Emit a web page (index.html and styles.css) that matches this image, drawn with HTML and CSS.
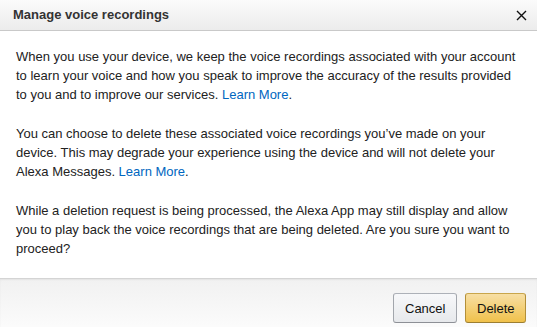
FILE: index.html
```html
<!DOCTYPE html>
<html lang="en">
<head>
<meta charset="utf-8">
<title>Manage voice recordings</title>
<link rel="stylesheet" href="styles.css">
</head>
<body>
<div class="dialog">
  <header class="dialog-header">
    <h1 class="dialog-title">Manage voice recordings</h1>
    <button class="close" aria-label="Close">
      <svg width="11" height="11" viewBox="0 0 11 11"><path d="M1 1 L10 10 M10 1 L1 10" stroke="#111" stroke-width="1.4" fill="none"/></svg>
    </button>
  </header>
  <div class="dialog-body">
    <p>When you use your device, we keep the voice recordings associated with your account to learn your voice and how you speak to improve the accuracy of the results provided to you and to improve our services. <a href="#">Learn More</a>.</p>
    <p>You can choose to delete these associated voice recordings you’ve made on your device. This may degrade your experience using the device and will not delete your Alexa Messages. <a href="#">Learn More</a>.</p>
    <p>While a deletion request is being processed, the Alexa App may still display and allow you to play back the voice recordings that are being deleted. Are you sure you want to proceed?</p>
  </div>
  <footer class="dialog-footer">
    <button class="btn btn-cancel">Cancel</button>
    <button class="btn btn-delete">Delete</button>
  </footer>
</div>
</body>
</html>
```
FILE: styles.css
```css
html, body {
  margin: 0;
  padding: 0;
  background: #fff;
}
body {
  font-family: "Liberation Sans", Arial, sans-serif;
  color: #111;
}
.dialog {
  width: 537px;
  height: 327px;
  display: flex;
  flex-direction: column;
  overflow: hidden;
}
.dialog-header {
  height: 31px;
  box-sizing: border-box;
  border-bottom: 1px solid #c9c9c9;
  background: linear-gradient(#fbfbfb, #ececec);
  display: flex;
  align-items: center;
  justify-content: space-between;
  padding: 0 10px 0 13px;
  flex: none;
}
.dialog-title {
  margin: 0;
  font-size: 13px;
  font-weight: bold;
  color: #333;
  line-height: 16px;
}
.close {
  border: 0;
  background: none;
  padding: 0;
  width: 11px;
  height: 11px;
  display: flex;
  margin-top: 1px;
}
.dialog-body {
  flex: 1;
  padding: 16px 16px 0 16px;
  font-size: 13px;
  line-height: 19px;
  color: #222;
}
.dialog-body p {
  margin: 0 0 20px 0;
}
.dialog-body a {
  color: #0066c0;
  text-decoration: none;
}
.dialog-footer {
  flex: none;
  height: 58px;
  box-sizing: border-box;
  border-top: 1px solid #d4d4d4;
  box-shadow: inset 0 1px 2px rgba(0,0,0,0.06);
  background: linear-gradient(#f1f1f1, #fdfdfd);
  display: flex;
  justify-content: flex-end;
  align-items: flex-start;
  gap: 8px;
  padding: 14px 11px 0 0;
}
.btn {
  height: 30px;
  box-sizing: border-box;
  border-radius: 3px;
  font-family: "Liberation Sans", Arial, sans-serif;
  font-size: 13px;
  color: #111;
  padding: 0 11px;
  cursor: pointer;
}
.btn-cancel {
  width: 64px;
  border: 1px solid #adb1b8;
  border-color: #adb1b8 #a2a6ac #8d9096;
  background: linear-gradient(#f7f8fa, #e7e9ec);
}
.btn-delete {
  width: 61px;
  border: 1px solid #a88734;
  border-color: #c9a64c #b38f38 #9c7e31;
  background: linear-gradient(#f7dfa5, #f0c14b);
}
```
